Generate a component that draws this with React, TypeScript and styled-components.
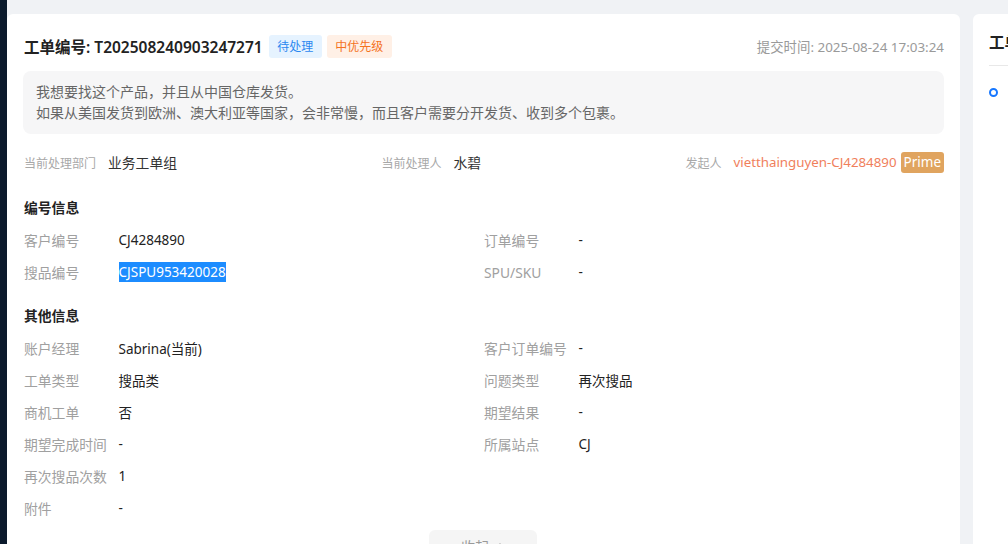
import React from 'react'
import styled, { createGlobalStyle } from 'styled-components'

const GlobalStyle = createGlobalStyle`
  html, body {
    margin: 0;
    padding: 0;
    background: #f0f2f5;
    font-family: "Noto Sans", "Noto Sans CJK SC", sans-serif;
    color: #333;
  }
`

const Page = styled.div`
  display: flex;
  height: 544px;
  overflow: hidden;
`

const SideStrip = styled.div`
  flex: 0 0 7px;
  background: #0b1a2c;
`

const Content = styled.div`
  flex: 1;
  display: flex;
  gap: 13px;
  padding-top: 14px;
  overflow: hidden;
`

const Card = styled.div`
  flex: 0 0 953px;
  box-sizing: border-box;
  background: #fff;
  border-radius: 6px 6px 0 0;
  padding: 16px 16px 0 17px;
`

const SideCard = styled.div`
  flex: 0 0 300px;
  box-sizing: border-box;
  background: #fff;
  border-radius: 6px 0 0 0;
  padding: 16px 0 0 16px;
`

const HeaderRow = styled.div`
  display: flex;
  align-items: center;
  height: 32px;
`

const Title = styled.h1`
  margin: 0;
  font-size: 15.5px;
  font-weight: 600;
  color: #222;
  white-space: nowrap;
`

const Tag = styled.span<{ $tone: 'blue' | 'orange' }>`
  display: inline-flex;
  align-items: center;
  height: 23px;
  padding: 0 8.5px;
  margin-left: ${p => (p.$tone === 'blue' ? '6px' : '5px')};
  border-radius: 3px;
  font-size: 12px;
  background: ${p => (p.$tone === 'blue' ? '#e6f3ff' : '#fff0e6')};
  color: ${p => (p.$tone === 'blue' ? '#2b88f0' : '#f4731f')};
`

const SubmitTime = styled.span`
  margin-left: auto;
  font-size: 13.4px;
  color: #9a9a9a;
`

const Description = styled.div`
  margin-top: 9px;
  margin-left: -1px;
  background: #f6f6f7;
  border-radius: 8px;
  padding: 11px 13px;
  font-size: 14px;
  line-height: 20.5px;
  color: #666;
`

const InfoRow = styled.div`
  display: flex;
  justify-content: space-between;
  align-items: center;
  height: 32px;
  margin-top: 12px;
`

const InfoItem = styled.div`
  display: flex;
  align-items: center;
`

const InfoLabel = styled.span`
  font-size: 12px;
  color: #a8a8a8;
  margin-right: 12px;
  padding-top: 1px;
`

const InfoValue = styled.span<{ $accent?: boolean }>`
  font-size: ${p => (p.$accent ? '13.3px' : '13.8px')};
  color: ${p => (p.$accent ? '#f07f5c' : '#333')};
`

const PrimeBadge = styled.span`
  display: inline-flex;
  align-items: center;
  height: 21px;
  padding: 0 3px;
  margin-left: 4px;
  border-radius: 3px;
  background: #e0a45f;
  color: #fff;
  font-size: 13.5px;
`

const Section = styled.section<{ $first?: boolean }>`
  margin-top: ${p => (p.$first ? '14px' : '12px')};
`

const SectionTitle = styled.h2`
  margin: 0;
  height: 32px;
  line-height: 32px;
  font-size: 13.8px;
  font-weight: 700;
  color: #222;
`

const FieldGrid = styled.div`
  display: grid;
  grid-template-columns: 1fr 1fr;
`

const Field = styled.div<{ $left?: boolean }>`
  display: flex;
  align-items: center;
  height: 32px;
  ${p => (p.$left ? 'grid-column: 1;' : '')}
`

const FieldLabel = styled.span`
  flex: 0 0 94.5px;
  font-size: 13.8px;
  color: #a0a0a0;
  white-space: nowrap;
`

const FieldValue = styled.span`
  font-size: 13.5px;
  color: #222;
`

const Selected = styled.span`
  display: inline-block;
  background: #1c8cff;
  color: #fff;
  line-height: 20px;
`

const CollapseWrap = styled.div`
  display: flex;
  justify-content: center;
  margin-top: 6px;
`

const CollapseButton = styled.button`
  display: flex;
  align-items: center;
  justify-content: center;
  gap: 6px;
  width: 108px;
  height: 32px;
  margin-left: -2px;
  border: none;
  border-radius: 6px;
  background: #f5f5f5;
  color: #999;
  font-family: inherit;
  font-size: 14px;
`

const SideTitle = styled.div`
  height: 36px;
  box-sizing: border-box;
  border-bottom: 1px solid #e8e8e8;
  font-size: 15.5px;
  font-weight: 600;
  line-height: 24px;
  color: #222;
  white-space: nowrap;
`

const TimelineDot = styled.div`
  width: 9px;
  height: 9px;
  box-sizing: border-box;
  border: 2.5px solid #1677ff;
  border-radius: 50%;
  margin-top: 22px;
`

type FieldData = { label: string; value: React.ReactNode; left?: boolean }

const numberFields: FieldData[] = [
  { label: '客户编号', value: 'CJ4284890' },
  { label: '订单编号', value: '-' },
  { label: '搜品编号', value: <Selected>CJSPU953420028</Selected> },
  { label: 'SPU/SKU', value: '-' },
]

const otherFields: FieldData[] = [
  { label: '账户经理', value: 'Sabrina(当前)' },
  { label: '客户订单编号', value: '-' },
  { label: '工单类型', value: '搜品类' },
  { label: '问题类型', value: '再次搜品' },
  { label: '商机工单', value: '否' },
  { label: '期望结果', value: '-' },
  { label: '期望完成时间', value: '-' },
  { label: '所属站点', value: 'CJ' },
  { label: '再次搜品次数', value: '1', left: true },
  { label: '附件', value: '-', left: true },
]

const Fields = ({ items }: { items: FieldData[] }) => (
  <FieldGrid>
    {items.map(f => (
      <Field key={f.label} $left={f.left}>
        <FieldLabel>{f.label}</FieldLabel>
        <FieldValue>{f.value}</FieldValue>
      </Field>
    ))}
  </FieldGrid>
)

const ChevronUp = () => (
  <svg width="10" height="10" viewBox="0 0 10 10" fill="none">
    <path d="M1.5 6.5 5 3l3.5 3.5" stroke="#999" strokeWidth="1.2" strokeLinecap="round" strokeLinejoin="round" />
  </svg>
)

export default function App() {
  return (
    <>
      <GlobalStyle />
      <Page>
        <SideStrip />
        <Content>
          <Card>
            <HeaderRow>
              <Title>工单编号: T202508240903247271</Title>
              <Tag $tone="blue">待处理</Tag>
              <Tag $tone="orange">中优先级</Tag>
              <SubmitTime>提交时间: 2025-08-24 17:03:24</SubmitTime>
            </HeaderRow>

            <Description>
              我想要找这个产品，并且从中国仓库发货。
              <br />
              如果从美国发货到欧洲、澳大利亚等国家，会非常慢，而且客户需要分开发货、收到多个包裹。
            </Description>

            <InfoRow>
              <InfoItem>
                <InfoLabel>当前处理部门</InfoLabel>
                <InfoValue>业务工单组</InfoValue>
              </InfoItem>
              <InfoItem>
                <InfoLabel>当前处理人</InfoLabel>
                <InfoValue>水碧</InfoValue>
              </InfoItem>
              <InfoItem>
                <InfoLabel>发起人</InfoLabel>
                <InfoValue $accent>vietthainguyen-CJ4284890</InfoValue>
                <PrimeBadge>Prime</PrimeBadge>
              </InfoItem>
            </InfoRow>

            <Section $first>
              <SectionTitle>编号信息</SectionTitle>
              <Fields items={numberFields} />
            </Section>

            <Section>
              <SectionTitle>其他信息</SectionTitle>
              <Fields items={otherFields} />
            </Section>

            <CollapseWrap>
              <CollapseButton>
                收起 <ChevronUp />
              </CollapseButton>
            </CollapseWrap>
          </Card>

          <SideCard>
            <SideTitle>工单记录</SideTitle>
            <TimelineDot />
          </SideCard>
        </Content>
      </Page>
    </>
  )
}
